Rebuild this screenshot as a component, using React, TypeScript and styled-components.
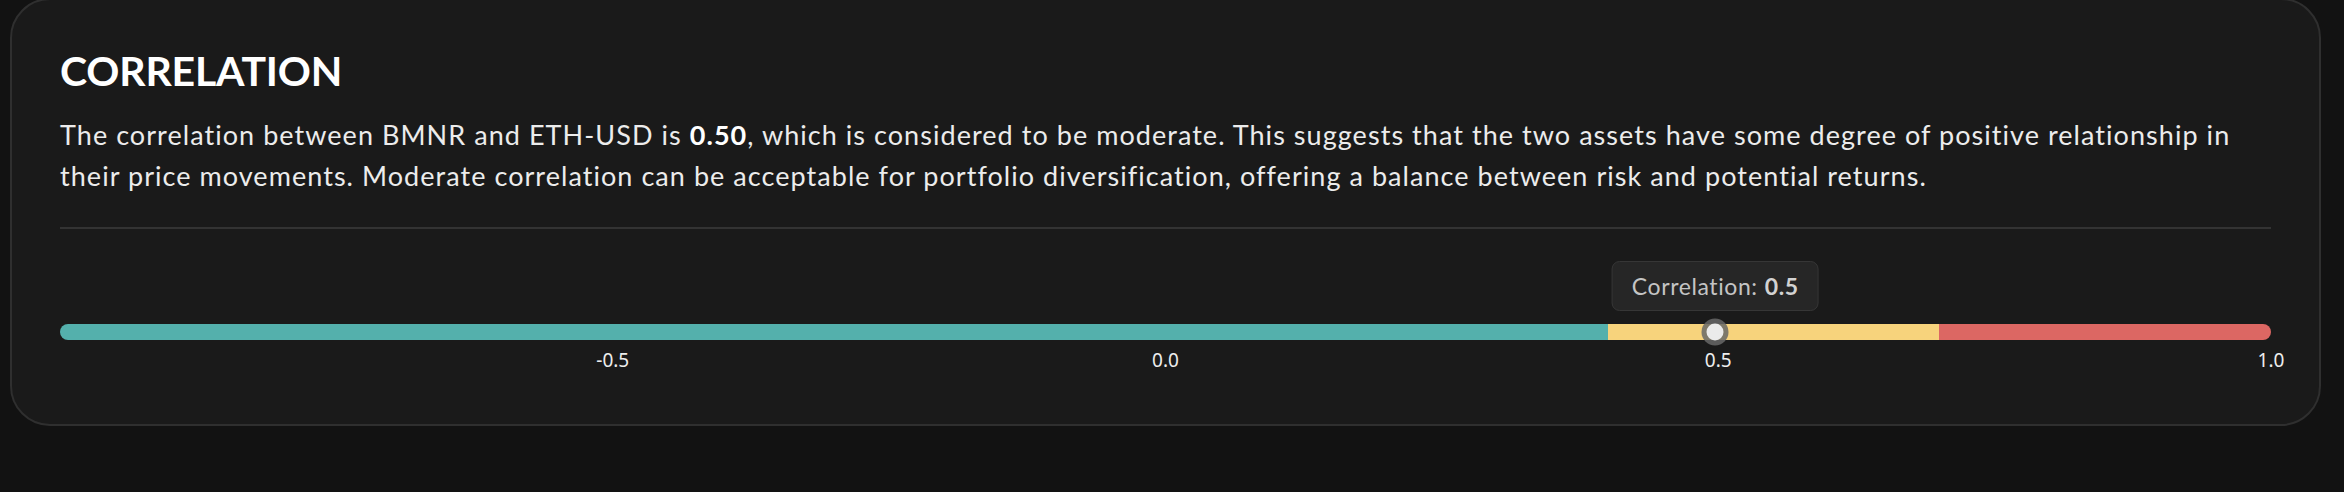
import styled, { createGlobalStyle } from "styled-components"

const GlobalStyle = createGlobalStyle`
    html, body {
        margin: 0;
        padding: 0;
        background: #121212;
    }
    body {
        font-family: Lato, "Noto Sans", sans-serif;
        color: #f2f2f2;
    }
`

const PageStyle = styled.div`
    padding: 0 23px 0 10px;
    height: 492px;
    overflow: hidden;
`

const CardStyle = styled.section`
    margin-top: -2px;
    background: #1a1a1a;
    border: 2px solid #2f2f2f;
    border-radius: 40px;
    padding: 46px 48px 50px;
`

const TitleStyle = styled.h2`
    margin: 0 0 19px;
    font-size: 41px;
    line-height: 50px;
    font-weight: 700;
    color: #ffffff;
    letter-spacing: -0.2px;
`

const TextStyle = styled.p`
    margin: 0;
    font-size: 27px;
    line-height: 40.5px;
    letter-spacing: 1.05px;
    color: #ececec;

    strong {
        font-weight: 700;
        color: #ffffff;
    }
`

const DividerStyle = styled.hr`
    margin: 31px 0 0;
    border: 0;
    height: 2px;
    background: #333333;
`

const SliderStyle = styled.div`
    margin-top: 95px;
    position: relative;
`

const TrackStyle = styled.div`
    display: flex;
    height: 16px;
    border-radius: 8px;
    overflow: hidden;
`

const SegmentStyle = styled.div<{ $color: string }>`
    background: ${(p) => p.$color};
    height: 100%;
`

const ThumbStyle = styled.div`
    position: absolute;
    top: 8px;
    margin-left: -3px;
    width: 17px;
    height: 17px;
    border-radius: 50%;
    background: #ebebeb;
    box-shadow: 0 0 0 5px rgba(105, 105, 105, 0.85);
    transform: translate(-50%, -50%);
`

const TooltipStyle = styled.div`
    position: absolute;
    bottom: calc(100% + 13px);
    margin-left: -3px;
    transform: translateX(-50%);
    height: 50px;
    box-sizing: border-box;
    padding: 0 19px;
    display: flex;
    align-items: center;
    white-space: nowrap;
    background: #262626;
    border: 1.5px solid #363636;
    border-radius: 8px;
    font-size: 23px;
    letter-spacing: 0.6px;
    color: #c4c4c4;

    strong {
        margin-left: 7px;
        font-weight: 700;
        color: #d2d2d2;
    }
`

const TicksStyle = styled.div`
    display: flex;
    margin-top: 7px;
    font-family: "Noto Sans", "Open Sans", sans-serif;
    font-size: 19px;
    line-height: 27px;
    color: #ededed;
`

const TickCellStyle = styled.div`
    flex: 1;
    display: flex;
    justify-content: flex-end;
`

const TickLabelStyle = styled.span`
    transform: translateX(50%);
`

const MIN = -1
const MAX = 1
const value = 0.5

const segments = [
    { from: -1, to: 0.4, color: "#54b0ac" },
    { from: 0.4, to: 0.7, color: "#f7d37c" },
    { from: 0.7, to: 1, color: "#dc6763" },
]

const ticks = ["-0.5", "0.0", "0.5", "1.0"]

const pct = (v: number) => ((v - MIN) / (MAX - MIN)) * 100

export default function App() {
    const pos = `${pct(value)}%`

    return (
        <PageStyle>
            <GlobalStyle />
            <CardStyle>
                <TitleStyle>CORRELATION</TitleStyle>
                <TextStyle>
                    The correlation between BMNR and ETH-USD is <strong>0.50</strong>, which is considered to be moderate.
                    This suggests that the two assets have some degree of positive relationship in their price movements.
                    Moderate correlation can be acceptable for portfolio diversification, offering a balance between risk
                    and potential returns.
                </TextStyle>
                <DividerStyle />
                <SliderStyle>
                    <TooltipStyle style={{ left: pos }}>
                        Correlation:<strong>{value}</strong>
                    </TooltipStyle>
                    <TrackStyle>
                        {segments.map((s) => (
                            <SegmentStyle key={s.color} $color={s.color} style={{ width: `${pct(s.to) - pct(s.from)}%` }} />
                        ))}
                    </TrackStyle>
                    <ThumbStyle style={{ left: pos }} />
                    <TicksStyle>
                        {ticks.map((t) => (
                            <TickCellStyle key={t}>
                                <TickLabelStyle>{t}</TickLabelStyle>
                            </TickCellStyle>
                        ))}
                    </TicksStyle>
                </SliderStyle>
            </CardStyle>
        </PageStyle>
    )
}
